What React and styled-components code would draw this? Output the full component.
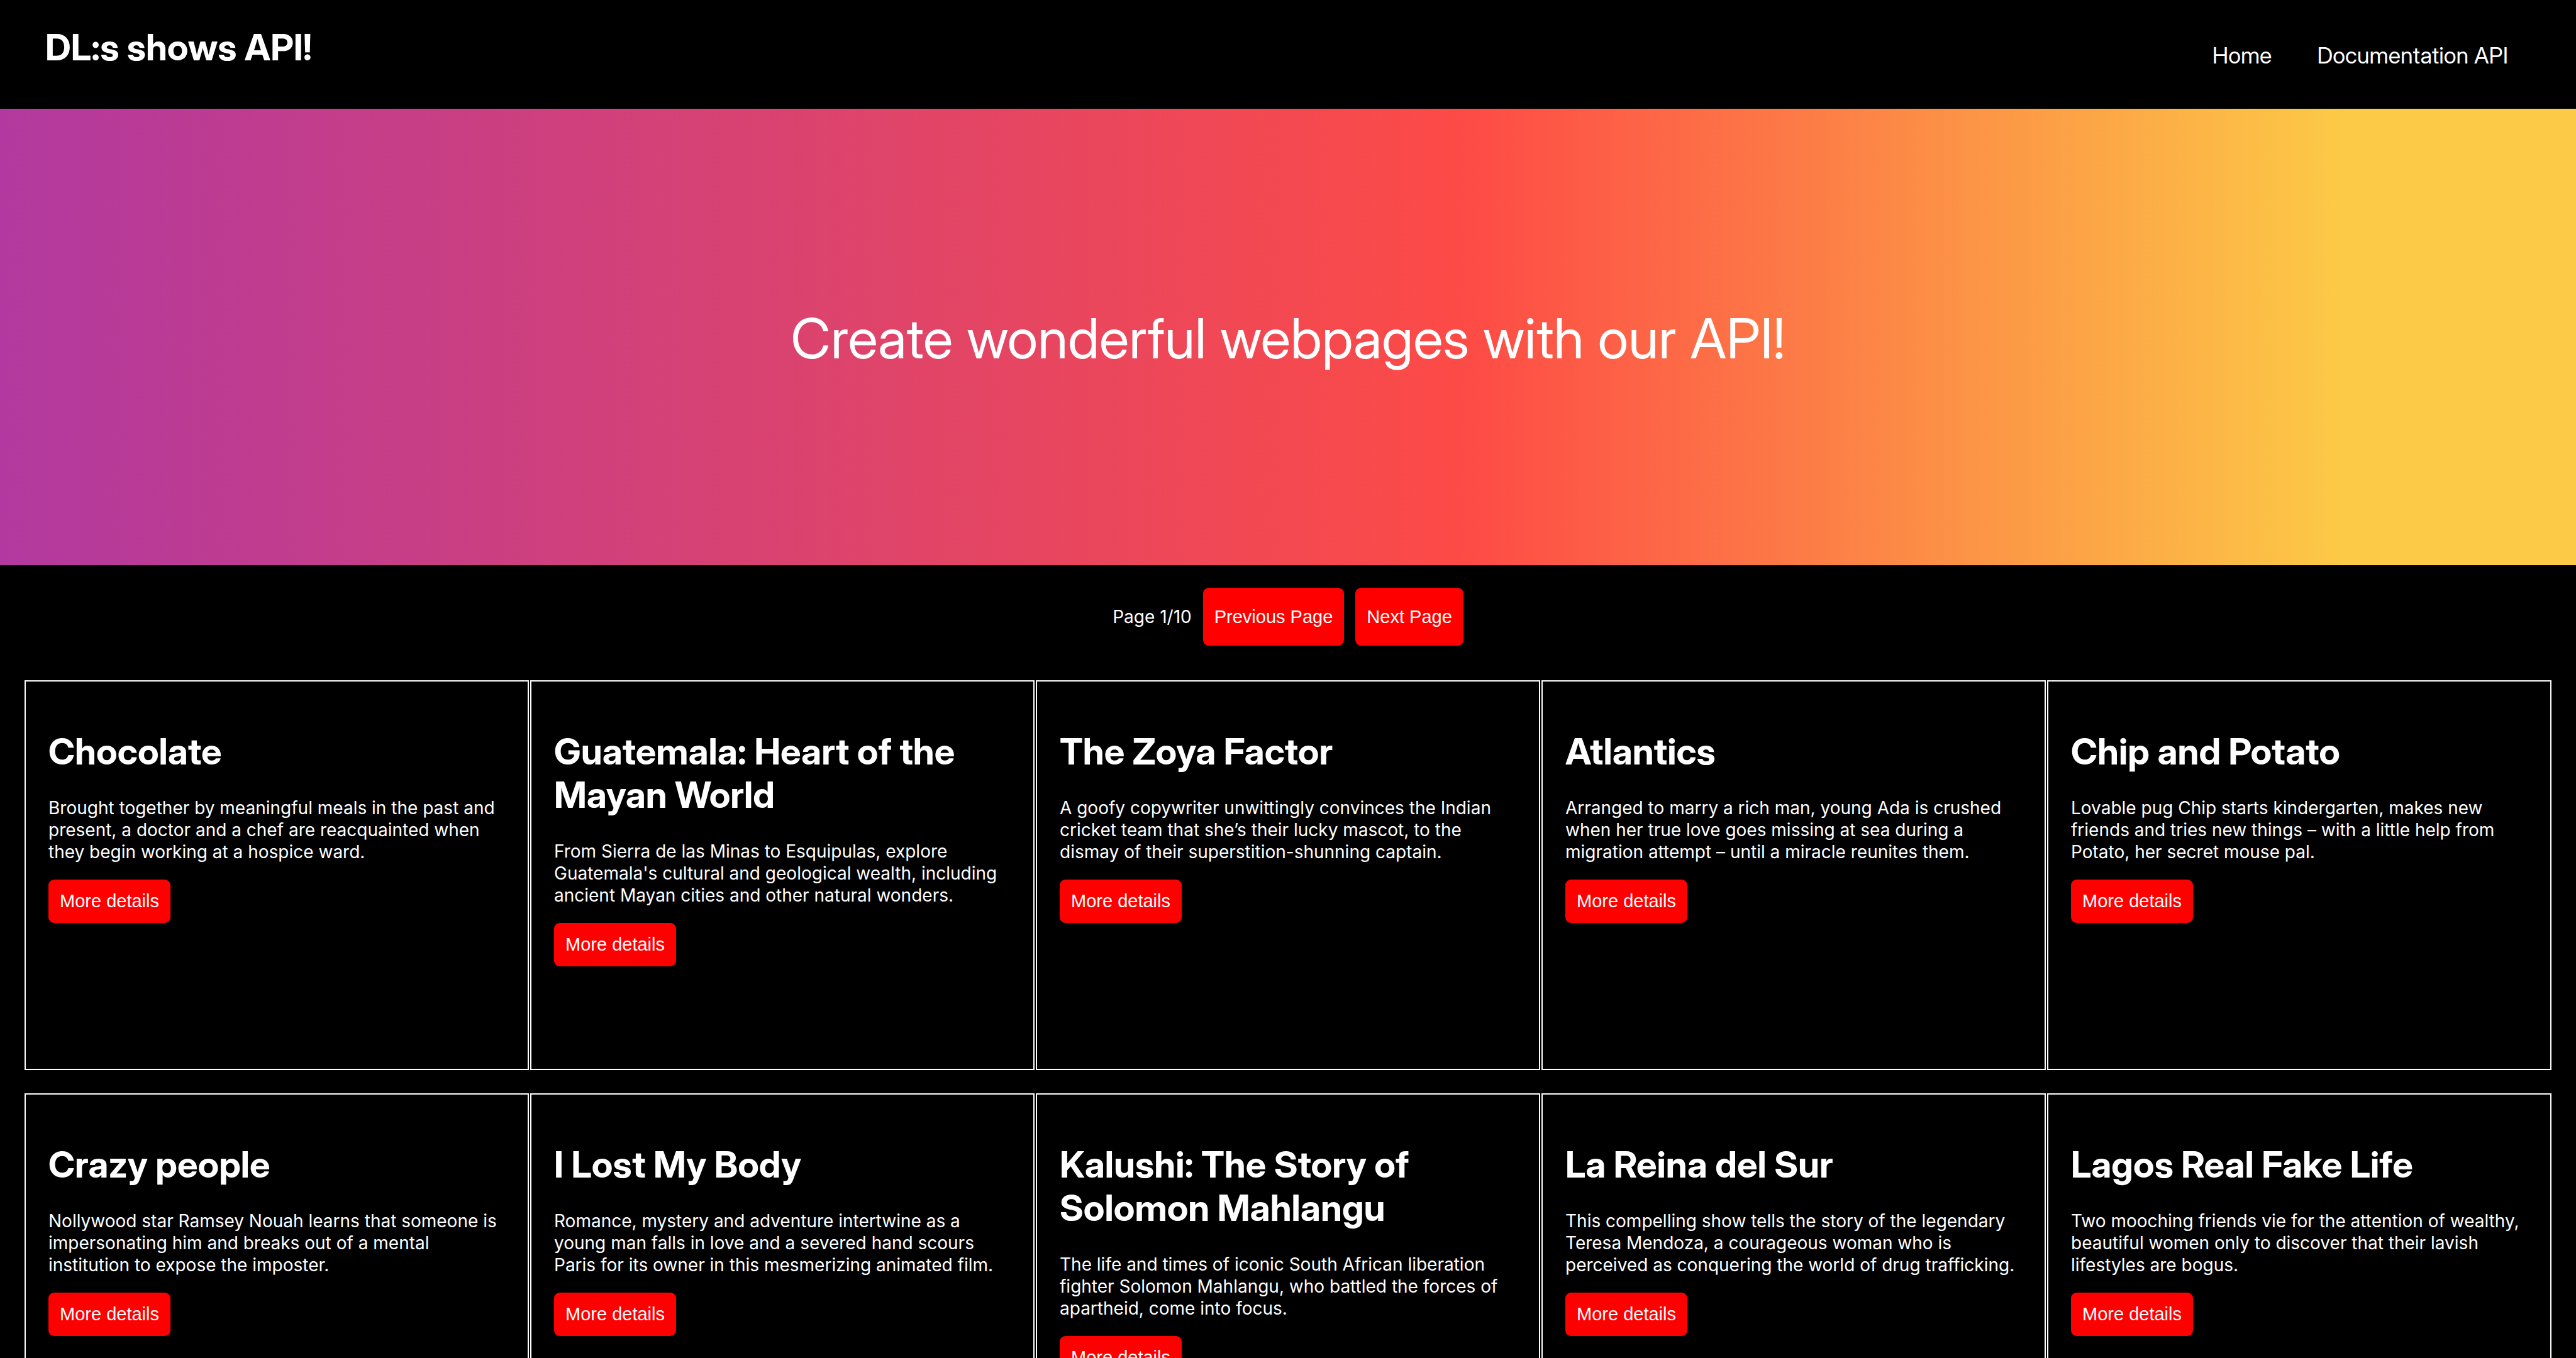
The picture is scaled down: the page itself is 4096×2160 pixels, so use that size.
import React from "react";
import styled, { createGlobalStyle } from "styled-components";

const displayFont = `"Inter Display", Inter, "Liberation Sans", sans-serif`;

const GlobalStyle = createGlobalStyle`
  *, *::before, *::after { box-sizing: border-box; }
  body {
    margin: 0;
    background: #000;
    color: #fff;
    font-family: Inter, "Liberation Sans", sans-serif;
    font-size: 28px;
    line-height: 35px;
  }
`;

const Header = styled.header`
  display: flex;
  justify-content: space-between;
  align-items: flex-start;
  min-height: 173px;
  padding: 36px 72px;
`;

const Brand = styled.h1`
  margin: 0;
  font-family: ${displayFont};
  font-size: 58px;
  line-height: 78px;
  font-weight: 700;
`;

const Nav = styled.nav`
  display: flex;
  gap: 72px;
  padding: 31px 36px 0 0;
`;

const NavLink = styled.a`
  color: #fff;
  font-family: ${displayFont};
  font-size: 36px;
  line-height: 42px;
  text-decoration: none;
`;

const Hero = styled.section`
  display: flex;
  align-items: center;
  justify-content: center;
  min-height: 726px;
  background: linear-gradient(90deg, #b2399f 0%, #fd4b46 57%, #fcca46 91%);
`;

const Tagline = styled.p`
  margin: 0;
  padding-top: 4px;
  font-family: ${displayFont};
  font-size: 88px;
  line-height: 108px;
`;

const Pagination = styled.div`
  display: flex;
  align-items: center;
  justify-content: center;
  gap: 18px;
  padding: 36px 0 55px;
`;

const Button = styled.button`
  height: ${(p) => (p.$tall ? 92 : 69)}px;
  padding: 0 18px;
  border: 0;
  border-radius: 9px;
  background: #f00;
  color: #fff;
  font-family: "Liberation Sans", Arial, sans-serif;
  font-size: 29px;
  cursor: pointer;
`;

const Grid = styled.main`
  display: grid;
  grid-template-columns: repeat(5, 1fr);
  gap: 37px 2px;
  padding: 0 39px 37px;
`;

const Card = styled.article`
  min-height: 620px;
  padding: 77px 36px 36px;
  border: 2px solid #fff;
`;

const Title = styled.h2`
  margin: 0 0 38px;
  font-family: ${displayFont};
  font-size: 58px;
  line-height: 69px;
  font-weight: 700;
`;

const Description = styled.p`
  margin: 0 0 26px;
`;

const shows = [
  ["Chocolate", "Brought together by meaningful meals in the past and present, a doctor and a chef are reacquainted when they begin working at a hospice ward."],
  ["Guatemala: Heart of the Mayan World", "From Sierra de las Minas to Esquipulas, explore Guatemala's cultural and geological wealth, including ancient Mayan cities and other natural wonders."],
  ["The Zoya Factor", "A goofy copywriter unwittingly convinces the Indian cricket team that she’s their lucky mascot, to the dismay of their superstition-shunning captain."],
  ["Atlantics", "Arranged to marry a rich man, young Ada is crushed when her true love goes missing at sea during a migration attempt – until a miracle reunites them."],
  ["Chip and Potato", "Lovable pug Chip starts kindergarten, makes new friends and tries new things – with a little help from Potato, her secret mouse pal."],
  ["Crazy people", "Nollywood star Ramsey Nouah learns that someone is impersonating him and breaks out of a mental institution to expose the imposter."],
  ["I Lost My Body", "Romance, mystery and adventure intertwine as a young man falls in love and a severed hand scours Paris for its owner in this mesmerizing animated film."],
  ["Kalushi: The Story of Solomon Mahlangu", "The life and times of iconic South African liberation fighter Solomon Mahlangu, who battled the forces of apartheid, come into focus."],
  ["La Reina del Sur", "This compelling show tells the story of the legendary Teresa Mendoza, a courageous woman who is perceived as conquering the world of drug trafficking."],
  ["Lagos Real Fake Life", "Two mooching friends vie for the attention of wealthy, beautiful women only to discover that their lavish lifestyles are bogus."],
];

export default function App() {
  return (
    <>
      <GlobalStyle />
      <Header>
        <Brand>DL:s shows API!</Brand>
        <Nav>
          <NavLink href="#home">Home</NavLink>
          <NavLink href="#docs">Documentation API</NavLink>
        </Nav>
      </Header>
      <Hero>
        <Tagline>Create wonderful webpages with our API!</Tagline>
      </Hero>
      <Pagination>
        <span>Page 1/10</span>
        <Button type="button" $tall>Previous Page</Button>
        <Button type="button" $tall>Next Page</Button>
      </Pagination>
      <Grid>
        {shows.map(([title, text]) => (
          <Card key={title}>
            <Title>{title}</Title>
            <Description>{text}</Description>
            <Button type="button">More details</Button>
          </Card>
        ))}
      </Grid>
    </>
  );
}
